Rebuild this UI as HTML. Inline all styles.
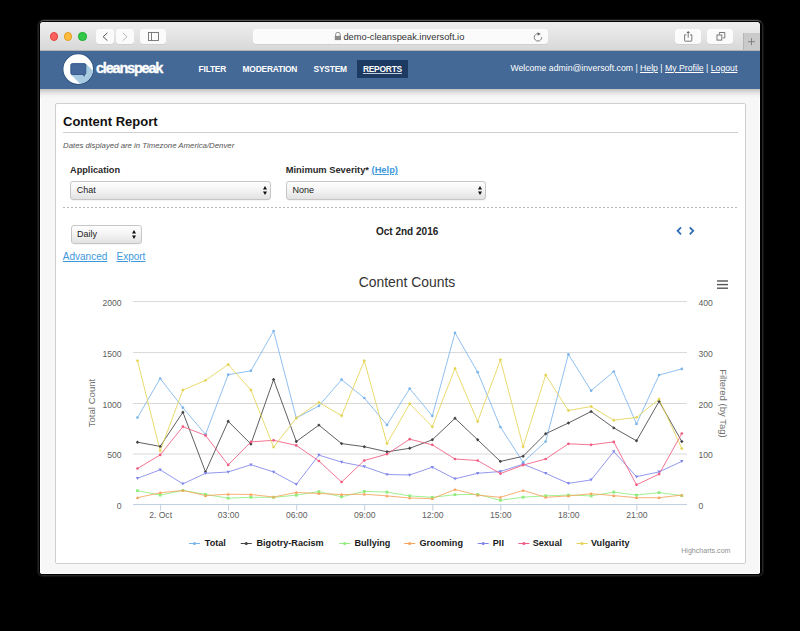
<!DOCTYPE html>
<html><head><meta charset="utf-8">
<style>
html,body{margin:0;padding:0;}
body{width:800px;height:631px;overflow:hidden;background:#000;position:relative;font-family:"Liberation Sans",sans-serif;}
.abs{position:absolute;}
#outline{left:37.5px;top:20px;width:723px;height:554px;border:1px solid #262626;border-top-color:#5a5a5a;box-shadow:0 0 1px 1px #141414;border-radius:6px 6px 5px 5px;}
#win{left:40px;top:22px;width:720px;height:552px;background:#f7f7f7;box-shadow:inset 1px 0 0 #fff,inset -1px 0 0 #fff,inset 0 -1px 0 #fff;border-radius:4px 4px 3px 3px;overflow:hidden;}
#toolbar{left:0;top:0;width:720px;height:28px;background:linear-gradient(#eeeeee,#e6e6e6 40%,#d8d8d8);border-bottom:1px solid #b4b4b4;}
.tl{top:10.3px;width:8.4px;height:8.4px;border-radius:50%;box-sizing:border-box;}
.btn{background:#fbfbfb;border-radius:3px;box-shadow:0 0.5px 0.5px rgba(0,0,0,0.12);}
#addr{left:212.5px;top:6.9px;width:295px;height:15.3px;}
#url{left:0;top:3.3px;width:295px;text-align:center;font-size:9.3px;color:#333;}
#header{left:0;top:29px;width:720px;height:38px;background:#446996;}
#shadow{left:0;top:67px;width:720px;height:9px;background:linear-gradient(#c3c3c3,#dedede 35%,#f2f2f2 75%,#f7f7f7);}
.nav{top:13.3px;font-size:8.4px;font-weight:bold;color:#fff;letter-spacing:-0.2px;}
#panel{left:15px;top:80.5px;width:689px;height:459.5px;background:#fff;border:1px solid #cfcfcf;border-radius:2px;}
.lbl{font-weight:bold;color:#2a2a2a;}
.sel{height:16.5px;border:1px solid #c6c6c6;border-radius:3px;background:linear-gradient(#fefefe,#f3f3f3 50%,#e2e2e2);box-shadow:0 0.5px 0.5px rgba(0,0,0,0.08);}
.sel span{position:absolute;left:5.5px;top:3px;font-size:9px;color:#222;}
.arr{position:absolute;right:3px;top:4px;width:4px;height:9px;}
a{color:#3d98dc;}
</style></head>
<body>
<div id="outline" class="abs"></div>
<div id="win" class="abs">
  <div id="toolbar" class="abs">
    <div class="abs tl" style="left:9.7px;background:#fc605c;border:0.6px solid #e2463f;"></div>
    <div class="abs tl" style="left:24px;background:#fdbc40;border:0.6px solid #dfa023;"></div>
    <div class="abs tl" style="left:38.2px;background:#34c84a;border:0.6px solid #1dac2b;"></div>
    <div class="abs btn" style="left:56.2px;top:6.8px;width:17.8px;height:15.4px;"></div>
    <div class="abs btn" style="left:75.9px;top:6.8px;width:18px;height:15.4px;"></div>
    <svg class="abs" style="left:56px;top:6px" width="40" height="18"><path d="M52 0" /><polyline points="11.4,4.9 7.1,8.75 11.4,12.6" fill="none" stroke="#555" stroke-width="1"/><polyline points="26.8,4.9 31.1,8.75 26.8,12.6" fill="none" stroke="#b8b8b8" stroke-width="1"/></svg>
    <div class="abs btn" style="left:100px;top:6.8px;width:26.2px;height:15.4px;"></div>
    <svg class="abs" style="left:100px;top:6px" width="27" height="18"><rect x="8.5" y="4.5" width="10" height="8" fill="none" stroke="#707070" stroke-width="0.9"/><line x1="11.5" x2="11.5" y1="4.5" y2="12.5" stroke="#707070" stroke-width="0.9"/></svg>
    <div id="addr" class="abs btn">
      <svg class="abs" style="left:81.5px;top:3.5px" width="8" height="9"><path d="M1.6 4 V2.6 A2.3 2.3 0 0 1 6.2 2.6 V4" fill="none" stroke="#8a8a8a" stroke-width="1"/><rect x="0.8" y="3.9" width="6.2" height="4.2" fill="#8a8a8a"/></svg>
      <div id="url" class="abs">&nbsp;&nbsp;&nbsp;demo-cleanspeak.inversoft.io</div>
      <svg class="abs" style="left:279.7px;top:3.2px" width="12" height="11" overflow="visible"><path d="M6.2 1.65 A3.7 3.7 0 1 0 9.65 5.1" fill="none" stroke="#7a7a7a" stroke-width="1"/><path d="M5.7 0.3 L8.7 2.0 L5.7 3.7 Z" fill="#666"/></svg>
    </div>
    <div class="abs btn" style="left:634.5px;top:6.8px;width:26.3px;height:15.3px;"></div>
    <svg class="abs" style="left:634.5px;top:6px" width="27" height="17"><path d="M11.3 6.8 H9.6 V12.6 Q9.6 13.2 10.2 13.2 H16.2 Q16.8 13.2 16.8 12.6 V6.8 H15.1" fill="none" stroke="#6a6a6a" stroke-width="0.9"/><line x1="13.2" x2="13.2" y1="4.2" y2="9.7" stroke="#6a6a6a" stroke-width="0.9"/><path d="M11.4 5.1 L13.2 2.9 L15 5.1 Z" fill="#6a6a6a"/></svg>
    <div class="abs btn" style="left:666.7px;top:6.8px;width:26.3px;height:15.3px;"></div>
    <svg class="abs" style="left:666.7px;top:6px" width="27" height="17"><path d="M12.4 6.5 V4.5 H17.8 V9.9 H15.8" fill="none" stroke="#6a6a6a" stroke-width="0.9"/><rect x="10" y="7" width="4.8" height="5.1" fill="none" stroke="#6a6a6a" stroke-width="0.9"/></svg>
    <div class="abs" style="left:703px;top:11px;width:17px;height:17px;background:#cacaca;border-left:1px solid #b5b5b5;box-sizing:border-box;"></div>
    <svg class="abs" style="left:703px;top:11px" width="17" height="17"><line x1="5" x2="12" y1="8.7" y2="8.7" stroke="#7a7a7a" stroke-width="0.9"/><line x1="8.5" x2="8.5" y1="5.2" y2="12.2" stroke="#7a7a7a" stroke-width="0.9"/></svg>
  </div>
  <div id="header" class="abs">
    <svg class="abs" style="left:22px;top:1.5px" width="34" height="34">
      <defs><clipPath id="cc"><circle cx="16.2" cy="16.1" r="14.8"/></clipPath></defs>
      <circle cx="16.2" cy="16.1" r="15.6" fill="#2c5282"/>
      <circle cx="16.2" cy="16.1" r="14.8" fill="#fff"/>
      <path clip-path="url(#cc)" d="M8.8 21.5 L23.8 10.6 L43.8 30.6 L28.8 41.5 Z" fill="#a9cbe2"/>
      <rect x="8.8" y="10.6" width="15" height="10.9" rx="1.5" fill="#45699b" stroke="#2f5688" stroke-width="0.9"/>
      <path d="M20.5 21.4 L22.5 24 L22.8 21.4 Z" fill="#2f5688"/>
    </svg>
    <div class="abs" style="left:56px;top:8.6px;font-size:14.5px;font-weight:bold;color:#fff;letter-spacing:-1.2px;-webkit-text-stroke:0.35px #fff;">cleanspeak</div>
    <div class="abs nav" style="left:158.6px;">FILTER</div>
    <div class="abs nav" style="left:202.6px;">MODERATION</div>
    <div class="abs nav" style="left:273.6px;">SYSTEM</div>
    <div class="abs" style="left:317px;top:9.4px;width:50.9px;height:17.5px;background:#1d3a62;"></div>
    <div class="abs nav" style="left:322.9px;text-decoration:underline;text-decoration-color:#c5cdd8;">REPORTS</div>
    <div class="abs" style="left:470.4px;top:11.5px;font-size:8.7px;color:#fff;white-space:nowrap;">Welcome admin@inversoft.com | <u>Help</u> | <u>My Profile</u> | <u>Logout</u></div>
  </div>
  <div id="shadow" class="abs"></div>
  <div id="panel" class="abs"></div>
</div>
<div class="abs" style="left:63px;top:113.5px;font-size:13px;font-weight:bold;color:#111;">Content Report</div>
<div class="abs" style="left:63px;top:132px;width:674.5px;height:1px;background:#cfcfcf;"></div>
<div class="abs" style="left:63px;top:140.5px;font-size:7.8px;font-style:italic;color:#555;">Dates displayed are in Timezone America/Denver</div>
<div class="abs lbl" style="left:70px;top:164.8px;font-size:9.2px;">Application</div>
<div class="abs lbl" style="left:285.8px;top:164.8px;font-size:9.3px;">Minimum Severity* <a style="font-weight:bold;text-decoration:underline;">(Help)</a></div>
<div class="abs sel" style="left:70.3px;top:181.2px;width:198.5px;"><span>Chat</span><svg class="arr" viewBox="0 0 4 9"><path d="M0 3.6 L2 0 L4 3.6Z M0 5.4 L2 9 L4 5.4Z" fill="#111"/></svg></div>
<div class="abs sel" style="left:286px;top:181.2px;width:197.7px;"><span>None</span><svg class="arr" viewBox="0 0 4 9"><path d="M0 3.6 L2 0 L4 3.6Z M0 5.4 L2 9 L4 5.4Z" fill="#111"/></svg></div>
<div class="abs" style="left:63px;top:206.5px;width:674px;height:1px;background:repeating-linear-gradient(90deg,#b8b8b8 0 2px,transparent 2px 4px);"></div>
<div class="abs sel" style="left:70.5px;top:225.2px;width:69.2px;"><span>Daily</span><svg class="arr" style="right:4.5px" viewBox="0 0 4 9"><path d="M0 3.6 L2 0 L4 3.6Z M0 5.4 L2 9 L4 5.4Z" fill="#111"/></svg></div>
<div class="abs" style="left:376px;top:225.5px;font-size:10px;font-weight:bold;color:#222;">Oct 2nd 2016</div>
<svg class="abs" style="left:670px;top:222px" width="30" height="16"><polyline points="11,5.3 7.6,8.8 11,12.3" fill="none" stroke="#2d6db5" stroke-width="1.8"/><polyline points="19.8,5.3 23.2,8.8 19.8,12.3" fill="none" stroke="#2d6db5" stroke-width="1.8"/></svg>
<div class="abs" style="left:62.8px;top:250.7px;font-size:10px;"><a style="text-decoration:underline;">Advanced</a></div>
<div class="abs" style="left:116.5px;top:250.7px;font-size:10px;"><a style="text-decoration:underline;">Export</a></div>
<div class="abs" style="left:0;top:0;"><svg class="chart" style="font-family:'Liberation Sans',sans-serif;display:block" width="800" height="631" viewBox="0 0 800 631">
<text x="407" y="287" text-anchor="middle" font-size="13.9" fill="#333">Content Counts</text>
<g stroke="#555" stroke-width="1.4"><line x1="717" x2="728" y1="281" y2="281"/><line x1="717" x2="728" y1="284.6" y2="284.6"/><line x1="717" x2="728" y1="288.2" y2="288.2"/></g>
<line x1="133" x2="687" y1="301.6" y2="301.6" stroke="#d8d8d8" stroke-width="1"/><line x1="133" x2="687" y1="352.6" y2="352.6" stroke="#d8d8d8" stroke-width="1"/><line x1="133" x2="687" y1="403.5" y2="403.5" stroke="#d8d8d8" stroke-width="1"/><line x1="133" x2="687" y1="454.0" y2="454.0" stroke="#d8d8d8" stroke-width="1"/>
<line x1="133" x2="687" y1="504.5" y2="504.5" stroke="#c0d0e0" stroke-width="1"/>
<line x1="160.6" x2="160.6" y1="504.5" y2="510.5" stroke="#c0d0e0" stroke-width="1"/><line x1="228.6" x2="228.6" y1="504.5" y2="510.5" stroke="#c0d0e0" stroke-width="1"/><line x1="296.7" x2="296.7" y1="504.5" y2="510.5" stroke="#c0d0e0" stroke-width="1"/><line x1="364.7" x2="364.7" y1="504.5" y2="510.5" stroke="#c0d0e0" stroke-width="1"/><line x1="432.8" x2="432.8" y1="504.5" y2="510.5" stroke="#c0d0e0" stroke-width="1"/><line x1="500.8" x2="500.8" y1="504.5" y2="510.5" stroke="#c0d0e0" stroke-width="1"/><line x1="568.8" x2="568.8" y1="504.5" y2="510.5" stroke="#c0d0e0" stroke-width="1"/><line x1="636.9" x2="636.9" y1="504.5" y2="510.5" stroke="#c0d0e0" stroke-width="1"/>
<g font-size="8.6" fill="#606060"><text x="160.6" y="518.1" text-anchor="middle">2. Oct</text><text x="228.6" y="518.1" text-anchor="middle">03:00</text><text x="296.7" y="518.1" text-anchor="middle">06:00</text><text x="364.7" y="518.1" text-anchor="middle">09:00</text><text x="432.8" y="518.1" text-anchor="middle">12:00</text><text x="500.8" y="518.1" text-anchor="middle">15:00</text><text x="568.8" y="518.1" text-anchor="middle">18:00</text><text x="636.9" y="518.1" text-anchor="middle">21:00</text><text x="121.5" y="305.9" text-anchor="end">2000</text><text x="121.5" y="356.9" text-anchor="end">1500</text><text x="121.5" y="407.8" text-anchor="end">1000</text><text x="121.5" y="458.3" text-anchor="end">500</text><text x="121.5" y="508.7" text-anchor="end">0</text><text x="698.5" y="305.9" text-anchor="start">400</text><text x="698.5" y="356.9" text-anchor="start">300</text><text x="698.5" y="407.8" text-anchor="start">200</text><text x="698.5" y="458.3" text-anchor="start">100</text><text x="698.5" y="508.7" text-anchor="start">0</text></g>
<text transform="translate(95,403) rotate(-90)" text-anchor="middle" font-size="9.6" fill="#707070">Total Count</text>
<text transform="translate(720,403.4) rotate(90)" text-anchor="middle" font-size="9.5" fill="#707070">Filtered (by Tag)</text>
<polyline fill="none" stroke="#7cb5ec" stroke-width="0.85" stroke-linejoin="round" points="137.5,417.6 160.2,378.5 182.9,407.7 205.5,434.4 228.2,374.7 250.9,370.8 273.6,331.0 296.3,418.0 318.9,405.9 341.6,379.7 364.3,398.0 387.0,424.9 409.7,388.6 432.3,415.9 455.0,332.8 477.7,372.2 500.4,427.0 523.1,462.3 545.7,441.5 568.4,354.4 591.1,390.7 613.8,371.5 636.5,423.9 659.1,375.0 681.8,368.9"/><polyline fill="none" stroke="#434348" stroke-width="0.85" stroke-linejoin="round" points="137.5,442.2 160.2,446.4 182.9,412.2 205.5,471.9 228.2,421.3 250.9,444.0 273.6,379.5 296.3,441.5 318.9,425.1 341.6,443.6 364.3,446.7 387.0,451.8 409.7,448.3 432.3,439.8 455.0,418.3 477.7,439.8 500.4,461.4 523.1,456.3 545.7,433.7 568.4,423.0 591.1,411.5 613.8,427.9 636.5,440.8 659.1,401.4 681.8,441.5"/><polyline fill="none" stroke="#90ed7d" stroke-width="0.85" stroke-linejoin="round" points="137.5,490.7 160.2,495.1 182.9,490.4 205.5,494.4 228.2,498.2 250.9,497.3 273.6,497.3 296.3,495.2 318.9,491.6 341.6,496.8 364.3,491.4 387.0,492.1 409.7,495.9 432.3,497.3 455.0,494.7 477.7,494.4 500.4,500.3 523.1,497.2 545.7,495.8 568.4,495.1 591.1,495.9 613.8,492.1 636.5,495.1 659.1,492.6 681.8,495.6"/><polyline fill="none" stroke="#f7a35c" stroke-width="0.85" stroke-linejoin="round" points="137.5,497.7 160.2,492.8 182.9,490.4 205.5,495.6 228.2,494.2 250.9,494.5 273.6,497.0 296.3,492.4 318.9,493.5 341.6,494.5 364.3,494.2 387.0,495.9 409.7,498.0 432.3,498.6 455.0,489.5 477.7,495.2 500.4,497.3 523.1,490.4 545.7,497.3 568.4,495.9 591.1,493.7 613.8,495.6 636.5,497.7 659.1,497.7 681.8,495.1"/><polyline fill="none" stroke="#8085e9" stroke-width="0.85" stroke-linejoin="round" points="137.5,478.3 160.2,469.8 182.9,483.9 205.5,473.3 228.2,472.0 250.9,464.7 273.6,472.0 296.3,484.4 318.9,455.1 341.6,462.1 364.3,466.6 387.0,474.5 409.7,475.0 432.3,467.2 455.0,478.8 477.7,473.3 500.4,471.5 523.1,464.2 545.7,473.3 568.4,483.4 591.1,479.9 613.8,451.6 636.5,476.7 659.1,471.9 681.8,461.4"/><polyline fill="none" stroke="#f15c80" stroke-width="0.85" stroke-linejoin="round" points="137.5,468.5 160.2,454.9 182.9,426.7 205.5,435.4 228.2,464.9 250.9,441.9 273.6,440.3 296.3,445.4 318.9,461.0 341.6,482.0 364.3,460.5 387.0,454.1 409.7,439.2 432.3,444.8 455.0,459.0 477.7,460.5 500.4,473.6 523.1,465.1 545.7,459.0 568.4,443.8 591.1,444.8 613.8,441.9 636.5,484.8 659.1,474.1 681.8,433.5"/><polyline fill="none" stroke="#e4d354" stroke-width="0.85" stroke-linejoin="round" points="137.5,360.7 160.2,450.9 182.9,390.0 205.5,380.4 228.2,364.5 250.9,390.0 273.6,447.1 296.3,418.0 318.9,402.4 341.6,415.7 364.3,360.7 387.0,443.6 409.7,403.8 432.3,426.7 455.0,368.4 477.7,421.5 500.4,359.8 523.1,446.7 545.7,375.0 568.4,410.5 591.1,406.5 613.8,420.2 636.5,417.4 659.1,399.1 681.8,448.5"/>
<g fill="#7cb5ec"><circle cx="137.5" cy="417.6" r="1.35"/><circle cx="160.2" cy="378.5" r="1.35"/><circle cx="182.9" cy="407.7" r="1.35"/><circle cx="205.5" cy="434.4" r="1.35"/><circle cx="228.2" cy="374.7" r="1.35"/><circle cx="250.9" cy="370.8" r="1.35"/><circle cx="273.6" cy="331.0" r="1.35"/><circle cx="296.3" cy="418.0" r="1.35"/><circle cx="318.9" cy="405.9" r="1.35"/><circle cx="341.6" cy="379.7" r="1.35"/><circle cx="364.3" cy="398.0" r="1.35"/><circle cx="387.0" cy="424.9" r="1.35"/><circle cx="409.7" cy="388.6" r="1.35"/><circle cx="432.3" cy="415.9" r="1.35"/><circle cx="455.0" cy="332.8" r="1.35"/><circle cx="477.7" cy="372.2" r="1.35"/><circle cx="500.4" cy="427.0" r="1.35"/><circle cx="523.1" cy="462.3" r="1.35"/><circle cx="545.7" cy="441.5" r="1.35"/><circle cx="568.4" cy="354.4" r="1.35"/><circle cx="591.1" cy="390.7" r="1.35"/><circle cx="613.8" cy="371.5" r="1.35"/><circle cx="636.5" cy="423.9" r="1.35"/><circle cx="659.1" cy="375.0" r="1.35"/><circle cx="681.8" cy="368.9" r="1.35"/></g><g fill="#434348"><path d="M137.5 440.5L139.2 442.2L137.5 443.9L135.8 442.2Z"/><path d="M160.2 444.7L161.9 446.4L160.2 448.1L158.5 446.4Z"/><path d="M182.9 410.5L184.6 412.2L182.9 413.9L181.2 412.2Z"/><path d="M205.5 470.2L207.2 471.9L205.5 473.6L203.8 471.9Z"/><path d="M228.2 419.6L229.9 421.3L228.2 423.0L226.5 421.3Z"/><path d="M250.9 442.3L252.6 444.0L250.9 445.7L249.2 444.0Z"/><path d="M273.6 377.8L275.3 379.5L273.6 381.2L271.9 379.5Z"/><path d="M296.3 439.8L298.0 441.5L296.3 443.2L294.6 441.5Z"/><path d="M318.9 423.4L320.6 425.1L318.9 426.8L317.2 425.1Z"/><path d="M341.6 441.9L343.3 443.6L341.6 445.3L339.9 443.6Z"/><path d="M364.3 445.0L366.0 446.7L364.3 448.4L362.6 446.7Z"/><path d="M387.0 450.1L388.7 451.8L387.0 453.5L385.3 451.8Z"/><path d="M409.7 446.6L411.4 448.3L409.7 450.0L408.0 448.3Z"/><path d="M432.3 438.1L434.0 439.8L432.3 441.5L430.6 439.8Z"/><path d="M455.0 416.6L456.7 418.3L455.0 420.0L453.3 418.3Z"/><path d="M477.7 438.1L479.4 439.8L477.7 441.5L476.0 439.8Z"/><path d="M500.4 459.7L502.1 461.4L500.4 463.1L498.7 461.4Z"/><path d="M523.1 454.6L524.8 456.3L523.1 458.0L521.4 456.3Z"/><path d="M545.7 432.0L547.4 433.7L545.7 435.4L544.0 433.7Z"/><path d="M568.4 421.3L570.1 423.0L568.4 424.7L566.7 423.0Z"/><path d="M591.1 409.8L592.8 411.5L591.1 413.2L589.4 411.5Z"/><path d="M613.8 426.2L615.5 427.9L613.8 429.6L612.1 427.9Z"/><path d="M636.5 439.1L638.2 440.8L636.5 442.5L634.8 440.8Z"/><path d="M659.1 399.7L660.8 401.4L659.1 403.1L657.4 401.4Z"/><path d="M681.8 439.8L683.5 441.5L681.8 443.2L680.1 441.5Z"/></g><g fill="#90ed7d"><rect x="136.1" y="489.3" width="2.8" height="2.8"/><rect x="158.8" y="493.7" width="2.8" height="2.8"/><rect x="181.5" y="489.0" width="2.8" height="2.8"/><rect x="204.1" y="493.0" width="2.8" height="2.8"/><rect x="226.8" y="496.8" width="2.8" height="2.8"/><rect x="249.5" y="495.9" width="2.8" height="2.8"/><rect x="272.2" y="495.9" width="2.8" height="2.8"/><rect x="294.9" y="493.8" width="2.8" height="2.8"/><rect x="317.5" y="490.2" width="2.8" height="2.8"/><rect x="340.2" y="495.4" width="2.8" height="2.8"/><rect x="362.9" y="490.0" width="2.8" height="2.8"/><rect x="385.6" y="490.7" width="2.8" height="2.8"/><rect x="408.3" y="494.5" width="2.8" height="2.8"/><rect x="430.9" y="495.9" width="2.8" height="2.8"/><rect x="453.6" y="493.3" width="2.8" height="2.8"/><rect x="476.3" y="493.0" width="2.8" height="2.8"/><rect x="499.0" y="498.9" width="2.8" height="2.8"/><rect x="521.7" y="495.8" width="2.8" height="2.8"/><rect x="544.3" y="494.4" width="2.8" height="2.8"/><rect x="567.0" y="493.7" width="2.8" height="2.8"/><rect x="589.7" y="494.5" width="2.8" height="2.8"/><rect x="612.4" y="490.7" width="2.8" height="2.8"/><rect x="635.1" y="493.7" width="2.8" height="2.8"/><rect x="657.7" y="491.2" width="2.8" height="2.8"/><rect x="680.4" y="494.2" width="2.8" height="2.8"/></g><g fill="#f7a35c"><path d="M137.5 496.0L139.2 499.0L135.8 499.0Z"/><path d="M160.2 491.1L161.9 494.1L158.5 494.1Z"/><path d="M182.9 488.7L184.6 491.7L181.2 491.7Z"/><path d="M205.5 493.9L207.2 496.9L203.8 496.9Z"/><path d="M228.2 492.5L229.9 495.5L226.5 495.5Z"/><path d="M250.9 492.8L252.6 495.8L249.2 495.8Z"/><path d="M273.6 495.3L275.3 498.3L271.9 498.3Z"/><path d="M296.3 490.7L298.0 493.7L294.6 493.7Z"/><path d="M318.9 491.8L320.6 494.8L317.2 494.8Z"/><path d="M341.6 492.8L343.3 495.8L339.9 495.8Z"/><path d="M364.3 492.5L366.0 495.5L362.6 495.5Z"/><path d="M387.0 494.2L388.7 497.2L385.3 497.2Z"/><path d="M409.7 496.3L411.4 499.3L408.0 499.3Z"/><path d="M432.3 496.9L434.0 499.9L430.6 499.9Z"/><path d="M455.0 487.8L456.7 490.8L453.3 490.8Z"/><path d="M477.7 493.5L479.4 496.5L476.0 496.5Z"/><path d="M500.4 495.6L502.1 498.6L498.7 498.6Z"/><path d="M523.1 488.7L524.8 491.7L521.4 491.7Z"/><path d="M545.7 495.6L547.4 498.6L544.0 498.6Z"/><path d="M568.4 494.2L570.1 497.2L566.7 497.2Z"/><path d="M591.1 492.0L592.8 495.0L589.4 495.0Z"/><path d="M613.8 493.9L615.5 496.9L612.1 496.9Z"/><path d="M636.5 496.0L638.2 499.0L634.8 499.0Z"/><path d="M659.1 496.0L660.8 499.0L657.4 499.0Z"/><path d="M681.8 493.4L683.5 496.4L680.1 496.4Z"/></g><g fill="#8085e9"><path d="M135.8 477.0L139.2 477.0L137.5 480.0Z"/><path d="M158.5 468.5L161.9 468.5L160.2 471.5Z"/><path d="M181.2 482.6L184.6 482.6L182.9 485.6Z"/><path d="M203.8 472.0L207.2 472.0L205.5 475.0Z"/><path d="M226.5 470.7L229.9 470.7L228.2 473.7Z"/><path d="M249.2 463.4L252.6 463.4L250.9 466.4Z"/><path d="M271.9 470.7L275.3 470.7L273.6 473.7Z"/><path d="M294.6 483.1L298.0 483.1L296.3 486.1Z"/><path d="M317.2 453.8L320.6 453.8L318.9 456.8Z"/><path d="M339.9 460.8L343.3 460.8L341.6 463.8Z"/><path d="M362.6 465.3L366.0 465.3L364.3 468.3Z"/><path d="M385.3 473.2L388.7 473.2L387.0 476.2Z"/><path d="M408.0 473.7L411.4 473.7L409.7 476.7Z"/><path d="M430.6 465.9L434.0 465.9L432.3 468.9Z"/><path d="M453.3 477.5L456.7 477.5L455.0 480.5Z"/><path d="M476.0 472.0L479.4 472.0L477.7 475.0Z"/><path d="M498.7 470.2L502.1 470.2L500.4 473.2Z"/><path d="M521.4 462.9L524.8 462.9L523.1 465.9Z"/><path d="M544.0 472.0L547.4 472.0L545.7 475.0Z"/><path d="M566.7 482.1L570.1 482.1L568.4 485.1Z"/><path d="M589.4 478.6L592.8 478.6L591.1 481.6Z"/><path d="M612.1 450.3L615.5 450.3L613.8 453.3Z"/><path d="M634.8 475.4L638.2 475.4L636.5 478.4Z"/><path d="M657.4 470.6L660.8 470.6L659.1 473.6Z"/><path d="M680.1 460.1L683.5 460.1L681.8 463.1Z"/></g><g fill="#f15c80"><circle cx="137.5" cy="468.5" r="1.35"/><circle cx="160.2" cy="454.9" r="1.35"/><circle cx="182.9" cy="426.7" r="1.35"/><circle cx="205.5" cy="435.4" r="1.35"/><circle cx="228.2" cy="464.9" r="1.35"/><circle cx="250.9" cy="441.9" r="1.35"/><circle cx="273.6" cy="440.3" r="1.35"/><circle cx="296.3" cy="445.4" r="1.35"/><circle cx="318.9" cy="461.0" r="1.35"/><circle cx="341.6" cy="482.0" r="1.35"/><circle cx="364.3" cy="460.5" r="1.35"/><circle cx="387.0" cy="454.1" r="1.35"/><circle cx="409.7" cy="439.2" r="1.35"/><circle cx="432.3" cy="444.8" r="1.35"/><circle cx="455.0" cy="459.0" r="1.35"/><circle cx="477.7" cy="460.5" r="1.35"/><circle cx="500.4" cy="473.6" r="1.35"/><circle cx="523.1" cy="465.1" r="1.35"/><circle cx="545.7" cy="459.0" r="1.35"/><circle cx="568.4" cy="443.8" r="1.35"/><circle cx="591.1" cy="444.8" r="1.35"/><circle cx="613.8" cy="441.9" r="1.35"/><circle cx="636.5" cy="484.8" r="1.35"/><circle cx="659.1" cy="474.1" r="1.35"/><circle cx="681.8" cy="433.5" r="1.35"/></g><g fill="#e4d354"><path d="M137.5 359.0L139.2 360.7L137.5 362.4L135.8 360.7Z"/><path d="M160.2 449.2L161.9 450.9L160.2 452.6L158.5 450.9Z"/><path d="M182.9 388.3L184.6 390.0L182.9 391.7L181.2 390.0Z"/><path d="M205.5 378.7L207.2 380.4L205.5 382.1L203.8 380.4Z"/><path d="M228.2 362.8L229.9 364.5L228.2 366.2L226.5 364.5Z"/><path d="M250.9 388.3L252.6 390.0L250.9 391.7L249.2 390.0Z"/><path d="M273.6 445.4L275.3 447.1L273.6 448.8L271.9 447.1Z"/><path d="M296.3 416.3L298.0 418.0L296.3 419.7L294.6 418.0Z"/><path d="M318.9 400.7L320.6 402.4L318.9 404.1L317.2 402.4Z"/><path d="M341.6 414.0L343.3 415.7L341.6 417.4L339.9 415.7Z"/><path d="M364.3 359.0L366.0 360.7L364.3 362.4L362.6 360.7Z"/><path d="M387.0 441.9L388.7 443.6L387.0 445.3L385.3 443.6Z"/><path d="M409.7 402.1L411.4 403.8L409.7 405.5L408.0 403.8Z"/><path d="M432.3 425.0L434.0 426.7L432.3 428.4L430.6 426.7Z"/><path d="M455.0 366.7L456.7 368.4L455.0 370.1L453.3 368.4Z"/><path d="M477.7 419.8L479.4 421.5L477.7 423.2L476.0 421.5Z"/><path d="M500.4 358.1L502.1 359.8L500.4 361.5L498.7 359.8Z"/><path d="M523.1 445.0L524.8 446.7L523.1 448.4L521.4 446.7Z"/><path d="M545.7 373.3L547.4 375.0L545.7 376.7L544.0 375.0Z"/><path d="M568.4 408.8L570.1 410.5L568.4 412.2L566.7 410.5Z"/><path d="M591.1 404.8L592.8 406.5L591.1 408.2L589.4 406.5Z"/><path d="M613.8 418.5L615.5 420.2L613.8 421.9L612.1 420.2Z"/><path d="M636.5 415.7L638.2 417.4L636.5 419.1L634.8 417.4Z"/><path d="M659.1 397.4L660.8 399.1L659.1 400.8L657.4 399.1Z"/><path d="M681.8 446.8L683.5 448.5L681.8 450.2L680.1 448.5Z"/></g>
<g font-size="9.1" font-weight="bold" fill="#1a1a1a"><line x1="189" x2="200" y1="543.5" y2="543.5" stroke="#7cb5ec" stroke-width="1"/><circle cx="194.5" cy="543.5" r="1.6" fill="#7cb5ec"/><text x="204.75" y="546.0">Total</text><line x1="240.75" x2="251.75" y1="543.5" y2="543.5" stroke="#434348" stroke-width="1"/><circle cx="246.25" cy="543.5" r="1.6" fill="#434348"/><text x="256.5" y="546.0">Bigotry-Racism</text><line x1="339.2" x2="350.2" y1="543.5" y2="543.5" stroke="#90ed7d" stroke-width="1"/><circle cx="344.7" cy="543.5" r="1.6" fill="#90ed7d"/><text x="354.5" y="546.0">Bullying</text><line x1="404.2" x2="415.2" y1="543.5" y2="543.5" stroke="#f7a35c" stroke-width="1"/><circle cx="409.7" cy="543.5" r="1.6" fill="#f7a35c"/><text x="419.5" y="546.0">Grooming</text><line x1="477.7" x2="488.7" y1="543.5" y2="543.5" stroke="#8085e9" stroke-width="1"/><circle cx="483.2" cy="543.5" r="1.6" fill="#8085e9"/><text x="492.8" y="546.0">PII</text><line x1="518.4" x2="529.4" y1="543.5" y2="543.5" stroke="#f15c80" stroke-width="1"/><circle cx="523.9" cy="543.5" r="1.6" fill="#f15c80"/><text x="532.7" y="546.0">Sexual</text><line x1="576.5" x2="587.5" y1="543.5" y2="543.5" stroke="#e4d354" stroke-width="1"/><circle cx="582.0" cy="543.5" r="1.6" fill="#e4d354"/><text x="590.9" y="546.0">Vulgarity</text></g>
<text x="730.5" y="552.5" text-anchor="end" font-size="7.1" fill="#909090">Highcharts.com</text>
</svg></div>
</body></html>
